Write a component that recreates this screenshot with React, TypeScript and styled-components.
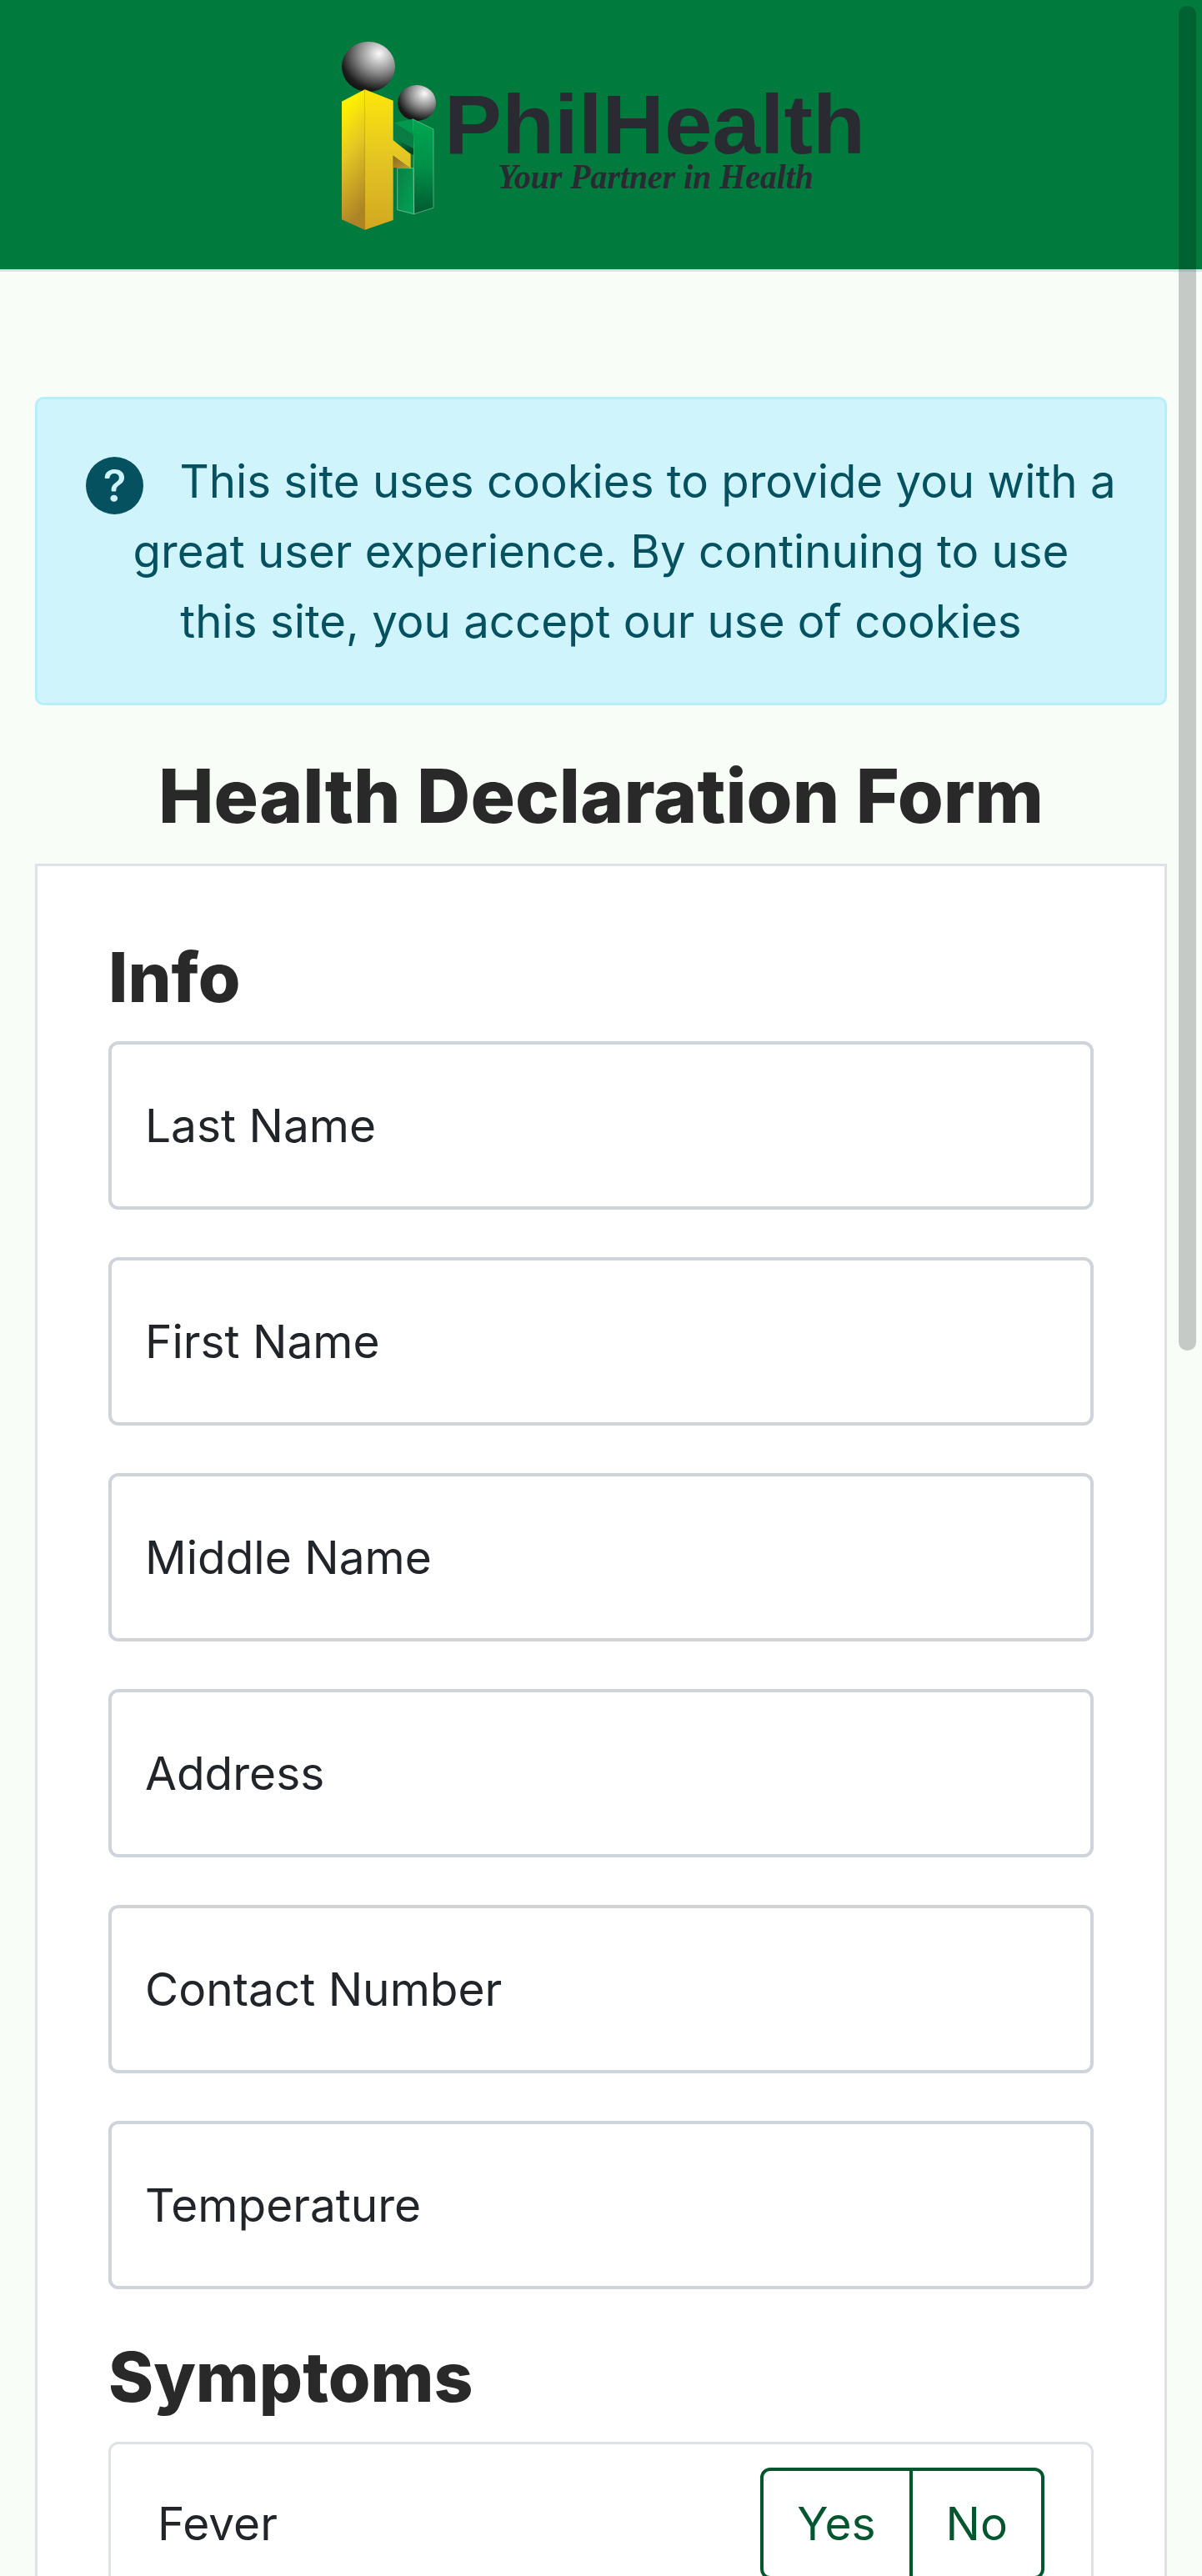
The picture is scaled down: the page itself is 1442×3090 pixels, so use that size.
import React from 'react'
import styled, { createGlobalStyle } from 'styled-components'
import { BsQuestionCircleFill } from 'react-icons/bs'

const fields = ['Last Name', 'First Name', 'Middle Name', 'Address', 'Contact Number', 'Temperature']

export default function App() {
  return (
    <Page>
      <GlobalStyle />
      <Header>
        <Logo />
      </Header>

      <Main>
        <Notice>
          <NoticeIcon />
          This site uses cookies to provide you with a great user experience. By continuing to use
          <br />
          this site, you accept our use of cookies
        </Notice>

        <Title>Health Declaration Form</Title>

        <Card>
          <SectionTitle>Info</SectionTitle>
          <Fields>
            {fields.map(field => (
              <Field key={field} placeholder={field} />
            ))}
          </Fields>

          <SymptomsTitle>Symptoms</SymptomsTitle>
          <SymptomBox>
            <SymptomName>Fever</SymptomName>
            <Toggle>
              <ToggleOption>Yes</ToggleOption>
              <ToggleOption>No</ToggleOption>
            </Toggle>
          </SymptomBox>
        </Card>
      </Main>

      <ScrollThumb />
    </Page>
  )
}

function Logo() {
  return (
    <LogoSvg viewBox="361 0 720 322" aria-label="PhilHealth">
      <defs>
        <radialGradient id="ball" cx="0.7" cy="0.24" r="0.85">
          <stop offset="0" stopColor="#fafafa" />
          <stop offset="0.45" stopColor="#8c8c8c" />
          <stop offset="0.85" stopColor="#1c1c1c" />
          <stop offset="1" stopColor="#111" />
        </radialGradient>
        <linearGradient id="yellowLeft" x1="0" y1="0" x2="0.2" y2="1">
          <stop offset="0" stopColor="#ffe82a" />
          <stop offset="0.15" stopColor="#fff000" />
          <stop offset="0.5" stopColor="#e4c624" />
          <stop offset="1" stopColor="#ad8326" />
        </linearGradient>
        <linearGradient id="yellowRight" x1="0" y1="0" x2="0" y2="1">
          <stop offset="0" stopColor="#fce60c" />
          <stop offset="0.5" stopColor="#e4c424" />
          <stop offset="1" stopColor="#d2a820" />
        </linearGradient>
        <linearGradient id="greenRight" x1="0" y1="0" x2="0" y2="1">
          <stop offset="0" stopColor="#00a651" />
          <stop offset="0.5" stopColor="#009048" />
          <stop offset="1" stopColor="#005a30" />
        </linearGradient>
        <linearGradient id="greenLeft" x1="0" y1="0" x2="1" y2="1">
          <stop offset="0" stopColor="#0a7f46" />
          <stop offset="1" stopColor="#00a455" />
        </linearGradient>
        <linearGradient id="greenShade" x1="0" y1="0" x2="1" y2="1">
          <stop offset="0" stopColor="#0a8a4c" />
          <stop offset="1" stopColor="#00391e" />
        </linearGradient>
        <linearGradient id="yellowShade" x1="0" y1="0" x2="1" y2="1">
          <stop offset="0" stopColor="#8a6a20" />
          <stop offset="1" stopColor="#c79a30" />
        </linearGradient>
      </defs>

      <ellipse cx="442" cy="80" rx="32" ry="30" fill="url(#ball)" />
      <ellipse cx="500" cy="123.5" rx="23" ry="21.5" fill="url(#ball)" />

      <polygon points="495,142.7 520,155 520,249.3 496.7,256.7 496,178" fill="url(#greenRight)" stroke="#8fd0aa" strokeWidth="0.6" />
      <polygon points="476.7,201.7 496,201.7 496.7,256.7 476.7,251.7" fill="url(#greenLeft)" stroke="#a8dcbc" strokeWidth="0.6" />
      <polygon points="472.7,147.3 495,142.7 496,161.7" fill="#00994d" />
      <polygon points="472.7,147.3 496,161.7 496,178.3 472.7,165" fill="#0a7d45" />
      <polygon points="472.7,165 496,178.3 496,186 472.7,172" fill="url(#greenShade)" />

      <polygon points="410,121.7 437.7,107.3 437.7,275.7 410,263.3" fill="url(#yellowLeft)" />
      <polygon points="437.7,107.3 471.7,120.7 471.7,168.3 492.7,185 492.7,202.3 471.7,186.7 471.7,264 437.7,275.7" fill="url(#yellowRight)" />
      <polygon points="471.7,186.7 492.7,202.3 471.7,201" fill="url(#yellowShade)" />

      <LogoName x="533" y="184" textLength="505" lengthAdjust="spacingAndGlyphs">PhilHealth</LogoName>
      <LogoTagline x="597" y="226" textLength="379" lengthAdjust="spacingAndGlyphs">Your Partner in Health</LogoTagline>
    </LogoSvg>
  )
}

///////////////////////////////////////////////////////////////////////////////////

const GlobalStyle = createGlobalStyle`
  html, body {
    margin: 0;
    height: 3090px;
    overflow: hidden;
  }

  body {
    background-color: #f8fdf8;
    color: #212529;
    font-family: Inter, "Noto Sans", sans-serif;
  }

  * {
    box-sizing: border-box;
  }
`

const Page = styled.div`
  position: relative;
  height: 3090px;
  overflow: hidden;
`

const Header = styled.header`
  display: flex;
  justify-content: center;
  height: 326px;
  border-bottom: 3px solid #dee2e6;
  background-color: #017a3e;
`

const LogoSvg = styled.svg`
  flex: none;
  width: 720px;
  height: 322px;
`

const LogoName = styled.text`
  font-family: "Liberation Sans", sans-serif;
  font-size: 100px;
  font-weight: 700;
  fill: #2a2a33;
`

const LogoTagline = styled.text`
  font-family: "Liberation Serif", serif;
  font-size: 42px;
  font-style: italic;
  font-weight: 700;
  fill: #2a2a33;
`

const Main = styled.main`
  padding: 150px 42px 0;
`

const Notice = styled.div`
  padding: 56px 40px;
  border: 3px solid #b6effb;
  border-radius: 10px;
  background-color: #cff4fc;
  color: #055160;
  font-size: 54.6px;
  line-height: 84px;
  text-align: center;
`

const NoticeIcon = styled(BsQuestionCircleFill)`
  width: 69px;
  height: 69px;
  margin-right: 43px;
  vertical-align: -20px;
`

const Title = styled.h1`
  margin: 0;
  padding: 61px 0 33px;
  color: #292929;
  font-size: 89px;
  font-weight: 800;
  line-height: 96px;
  text-align: center;
`

const Card = styled.section`
  padding: 86px 85px 200px;
  border: 3px solid #dee2e6;
  background-color: #fff;
`

const SectionTitle = styled.h2`
  margin: 0 0 28px;
  color: #292929;
  font-size: 82px;
  font-weight: 800;
  line-height: 96px;
`

const SymptomsTitle = styled(SectionTitle)`
  margin: 58px 0 29px;
`

const Fields = styled.div`
  display: flex;
  flex-direction: column;
  gap: 57px;
`

const Field = styled.input`
  display: block;
  width: 100%;
  height: 202px;
  padding: 0 40px;
  border: 4px solid #ced4da;
  border-radius: 12px;
  background-color: #fff;
  color: #212529;
  font-family: inherit;
  font-size: 55px;

  &::placeholder {
    color: #212529;
    opacity: 1;
  }
`

const SymptomBox = styled.div`
  display: flex;
  justify-content: space-between;
  align-items: center;
  padding: 28px 56px 28px 56px;
  border: 3px solid #dee2e6;
  border-radius: 12px;
`

const SymptomName = styled.span`
  font-size: 55px;
`

const Toggle = styled.div`
  display: flex;
  height: 134px;
  border: 4px solid #03562e;
  border-radius: 12px;
`

const ToggleOption = styled.div`
  display: flex;
  align-items: center;
  padding: 0 40px;
  color: #03562e;
  font-size: 55px;

  & + & {
    border-left: 4px solid #03562e;
  }
`

const ScrollThumb = styled.div`
  position: absolute;
  top: 7px;
  left: 1414px;
  width: 21px;
  height: 1613px;
  border-radius: 10px;
  background-color: rgba(0, 0, 0, 0.2);
`
